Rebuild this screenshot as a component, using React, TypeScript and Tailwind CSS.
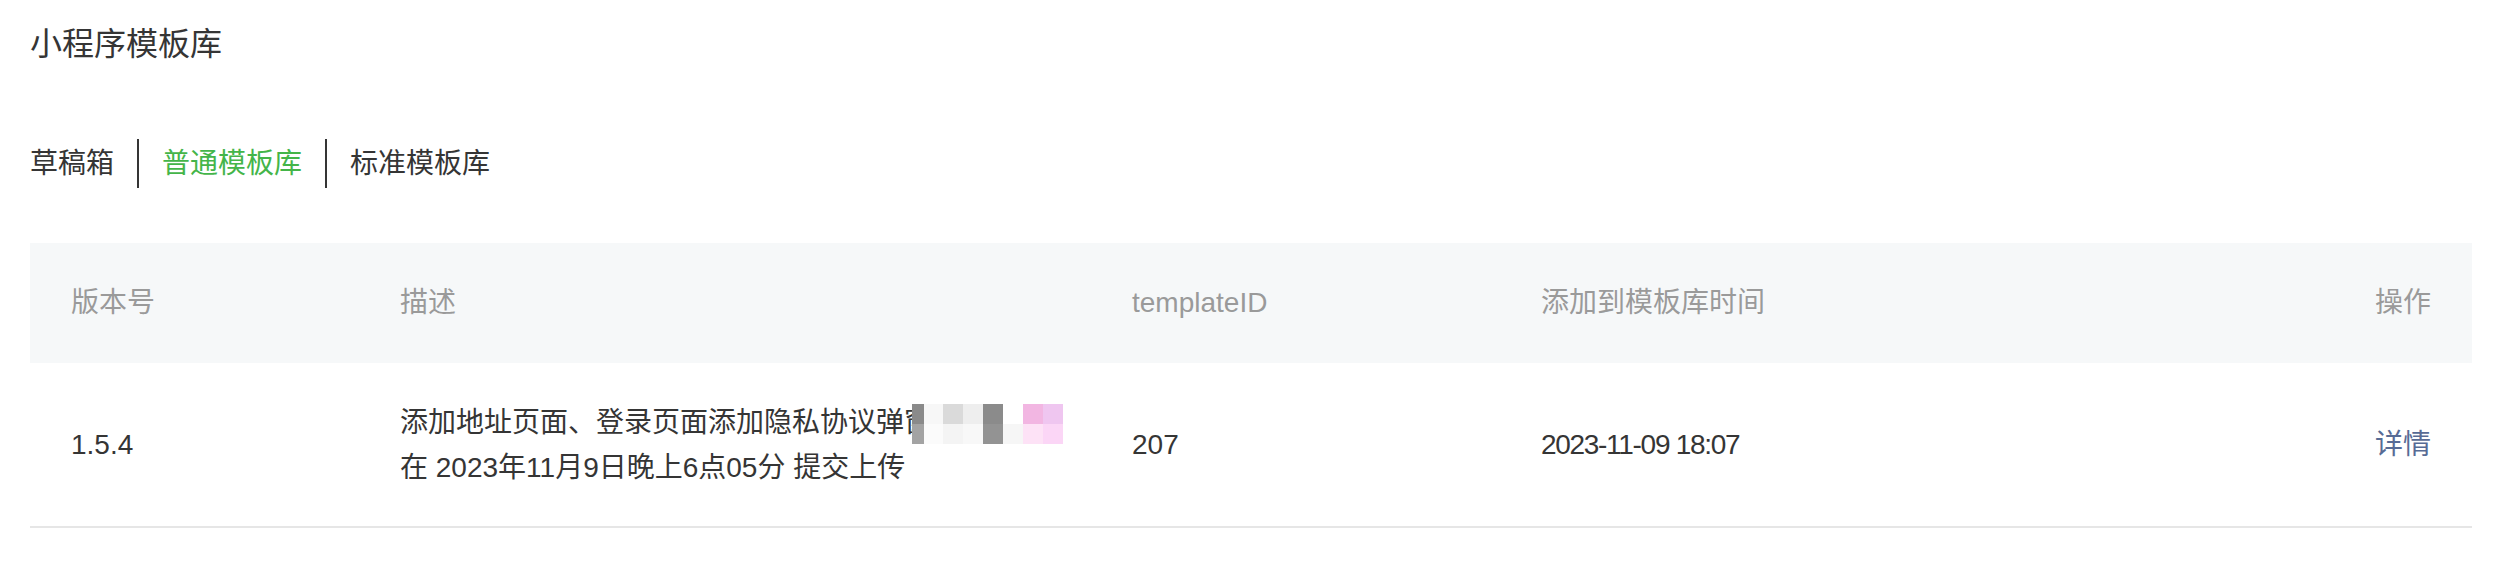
const font = "font-['Liberation_Sans','Noto_Sans_CJK_SC',sans-serif]";

function Mosaic() {
  return (
    <span className="relative ml-[-20px] inline-flex h-[40px] align-middle">
      <span className="flex w-[12px] flex-col">
        <span className="h-[20px] bg-[#8a8a8a]" />
        <span className="h-[20px] bg-[#a3a3a3]" />
      </span>
      <span className="flex w-[19px] flex-col">
        <span className="h-[20px] bg-[#f7f7f7]" />
        <span className="h-[20px] bg-[#fbfbfb]" />
      </span>
      <span className="flex w-[20px] flex-col">
        <span className="h-[20px] bg-[#dadada]" />
        <span className="h-[20px] bg-[#f4f4f4]" />
      </span>
      <span className="flex w-[20px] flex-col">
        <span className="h-[20px] bg-[#eeeeee]" />
        <span className="h-[20px] bg-[#f8f8f8]" />
      </span>
      <span className="flex w-[20px] flex-col">
        <span className="h-[20px] bg-[#8b8b8b]" />
        <span className="h-[20px] bg-[#939393]" />
      </span>
      <span className="flex w-[20px] flex-col">
        <span className="h-[20px] bg-white" />
        <span className="h-[20px] bg-[#f6f6f6]" />
      </span>
      <span className="flex w-[20px] flex-col">
        <span className="h-[20px] bg-[#f2b6e2]" />
        <span className="h-[20px] bg-[#fde2f6]" />
      </span>
      <span className="flex w-[20px] flex-col">
        <span className="h-[20px] bg-[#efc6f0]" />
        <span className="h-[20px] bg-[#fbd6f6]" />
      </span>
    </span>
  );
}

export default function App() {
  const tabs = ["草稿箱", "普通模板库", "标准模板库"];
  const active = 1;

  return (
    <div className={`min-h-[568px] w-[2496px] bg-white pl-[30px] pr-[24px] text-[#353535] ${font}`}>
      <div className="pt-[22px] text-[32px] leading-[45px]">小程序模板库</div>

      <div className="mt-[72px] flex h-[49px] items-center text-[28px]">
        {tabs.map((t, i) => (
          <div key={t} className="flex h-full items-center">
            {i > 0 && <div className="h-full w-[2px] bg-[#353535]" />}
            <div
              className={`${i === 0 ? "pr-[23px]" : "px-[23px]"} ${
                i === active ? "text-[#44b549]" : "text-[#353535]"
              }`}
            >
              {t}
            </div>
          </div>
        ))}
      </div>

      <div className="mt-[55px] text-[28px]">
        <div className="grid h-[120px] grid-cols-[329px_732px_409px_1fr_auto] items-center bg-[#f6f8f9] px-[41px] text-[#9a9a9a]">
          <div>版本号</div>
          <div>描述</div>
          <div>templateID</div>
          <div>添加到模板库时间</div>
          <div className="text-right">操作</div>
        </div>
        <div className="grid h-[165px] grid-cols-[329px_732px_409px_1fr_auto] items-center border-b-2 border-[#e6e6e6] px-[41px] leading-[45px]">
          <div>1.5.4</div>
          <div>
            <div className="whitespace-nowrap">
              添加地址页面、登录页面添加隐私协议弹窗
              <Mosaic />
            </div>
            <div>在 2023年11月9日晚上6点05分 提交上传</div>
          </div>
          <div>207</div>
          <div className="tracking-[-1.3px]">2023-11-09 18:07</div>
          <div className="text-right text-[#576b95]">详情</div>
        </div>
      </div>
    </div>
  );
}
